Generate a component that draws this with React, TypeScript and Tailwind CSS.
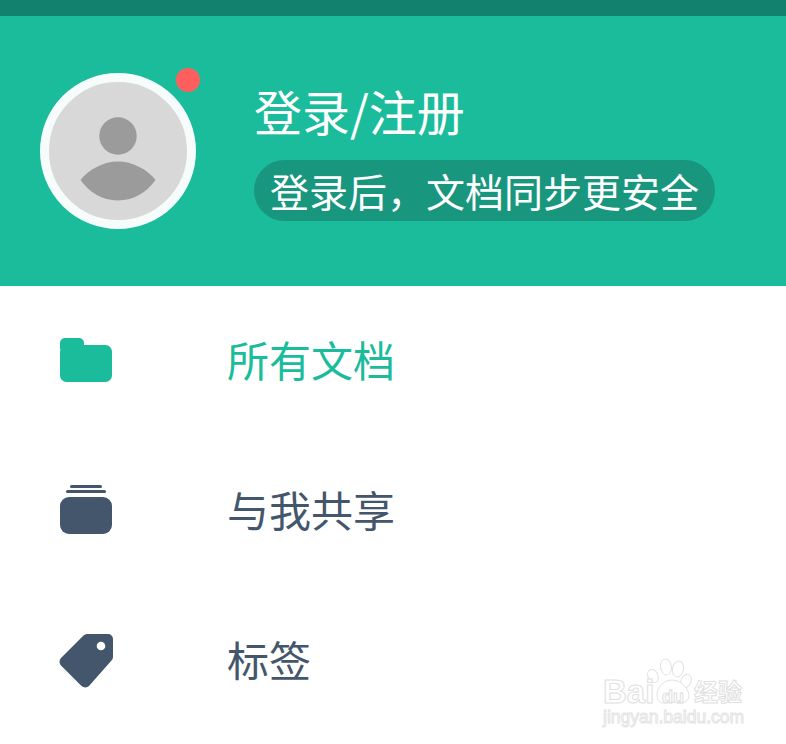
const cjk = "font-['Noto_Sans_CJK_SC','Noto_Sans',sans-serif]";

function Row({ icon, label, active }: { icon: React.ReactNode; label: string; active?: boolean }) {
  return (
    <div className="flex h-[150px] items-center">
      <div className="flex w-[227px] shrink-0 pl-[58px]">{icon}</div>
      <span className={`pb-1 text-[42px] leading-none ${active ? 'text-[#1abc9c]' : 'text-[#44566c]'}`}>{label}</span>
    </div>
  );
}

const FolderIcon = (
  <svg width="56" height="48" viewBox="0 0 56 48" className="block">
    <path d="M2 6a5 5 0 0 1 5-5h14a5 5 0 0 1 5 5v6H2z" fill="#1abc9c" />
    <rect x="2" y="8" width="52" height="37" rx="6.500" fill="#1abc9c" />
  </svg>
);
const StackIcon = (
  <svg width="56" height="52" viewBox="0 0 56 52" className="block">
    <rect x="12" y="0" width="32" height="3" rx="1.500" fill="#44566c" />
    <rect x="8" y="5" width="40" height="3" rx="1.500" fill="#44566c" />
    <rect x="2" y="12" width="52" height="37" rx="9" fill="#44566c" />
  </svg>
);
const TagIcon = (
  <svg width="56" height="56" viewBox="0 0 56 56" className="block">
    <path d="M29 1H50a5 5 0 0 1 5 5V24a5 5 0 0 1-1.500 3.500L31 53a5.500 5.500 0 0 1-7.500 0L3 32.500a5.500 5.500 0 0 1 0-7.500L25.500 2.500A5 5 0 0 1 29 1z" fill="#44566c" />
    <circle cx="43" cy="13" r="4.300" fill="#fff" />
  </svg>
);

function Watermark() {
  return (
    <div className="absolute left-[603px] top-[658px] h-[70px] w-[142px]">
      <svg width="142" height="48" viewBox="0 0 142 48" className="absolute left-0 top-0" fill="#fff" stroke="#e2e2e2" strokeWidth="1">
        <ellipse cx="50" cy="18" rx="5" ry="7" transform="rotate(-25 50 18)" />
        <ellipse cx="63" cy="9" rx="5.500" ry="8" transform="rotate(-10 63 9)" />
        <ellipse cx="75" cy="11" rx="5.500" ry="8" transform="rotate(12 75 11)" />
        <ellipse cx="83" cy="23" rx="5" ry="7" transform="rotate(25 83 23)" />
        <path d="M54 37c0-8 7-15 15-15s16 7 17 15c0 6-5 8-9 8-3 0-5-1-8-1s-5 1-8 1c-4 0-7-2-7-8z" />
      </svg>
      <span className="absolute left-0 top-[16px] font-['Liberation_Sans',sans-serif] text-[33px] font-bold leading-[36px] text-white [-webkit-text-stroke:1px_#e0e0e0]">Bai</span>
      <span className="absolute left-[59px] top-[30px] font-['Liberation_Sans',sans-serif] text-[18px] font-bold leading-[18px] text-white [-webkit-text-stroke:1px_#e0e0e0]">du</span>
      <span className="absolute left-[91px] top-[19px] text-[24px] font-bold leading-[28px] text-white [-webkit-text-stroke:1px_#e0e0e0]">经验</span>
      <span className="absolute left-0 top-[49px] whitespace-nowrap font-['Liberation_Sans',sans-serif] text-[17.500px] leading-[20px] text-white [-webkit-text-stroke:1px_#e4e4e4]">jingyan.baidu.com</span>
    </div>
  );
}

export default function App() {
  return (
    <div className={`relative h-[744px] w-[786px] overflow-hidden bg-white ${cjk}`}>
      <div className="h-4 bg-[#12826e]" />
      <header className="flex h-[270px] items-center bg-[#1abc9c] pl-10">
        <div className="relative mr-[58px] h-[156px] w-[156px] shrink-0 rounded-full border-[9px] border-[#f6fcfb] bg-[#d8d8d8]">
          <svg width="138" height="138" viewBox="0 0 138 138" className="block">
            <circle cx="69" cy="54" r="18.700" fill="#9b9b9b" />
            <path d="M31.500 98C40 87 55 79.500 69 79.500S98 87 106.500 98C98 110 85 118.500 69 118.500S40 110 31.500 98z" fill="#9b9b9b" />
          </svg>
          <span className="absolute -top-[14px] left-[127px] h-6 w-6 rounded-full bg-[#ff5e5e]" />
        </div>
        <div className="flex flex-col items-start self-start pt-16">
          <h1 className="text-[48px] font-normal leading-[60px] text-white">登录/注册</h1>
          <p className="mt-5 rounded-full bg-[#18967e] px-4 text-[39px] leading-[61px] text-white">登录后，文档同步更安全</p>
        </div>
      </header>
      <nav>
        <Row icon={FolderIcon} label="所有文档" active />
        <Row icon={StackIcon} label="与我共享" />
        <Row icon={TagIcon} label="标签" />
      </nav>
      <Watermark />
    </div>
  );
}
